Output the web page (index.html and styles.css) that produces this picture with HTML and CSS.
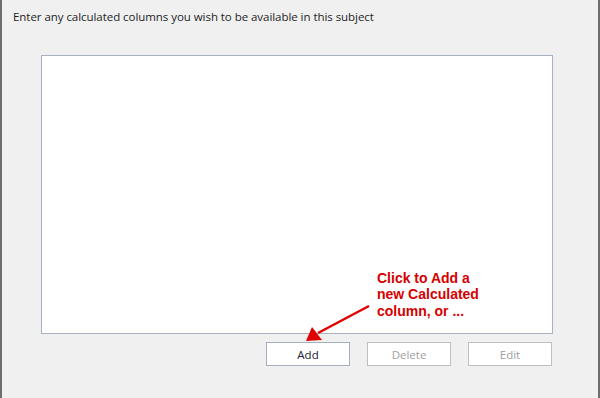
FILE: index.html
```html
<!DOCTYPE html>
<html>
<head>
<meta charset="utf-8">
<link rel="stylesheet" href="styles.css">
</head>
<body>
<div class="frame">
  <p class="intro">Enter any calculated columns you wish to be available in this subject</p>
  <div class="listbox"></div>
  <div class="buttons">
    <button class="btn">Add</button>
    <button class="btn disabled">Delete</button>
    <button class="btn disabled">Edit</button>
  </div>
  <div class="note">Click to Add a<br>new Calculated<br>column, or ...</div>
  <svg class="arrow" width="600" height="398" viewBox="0 0 600 398">
    <line x1="369" y1="306" x2="318" y2="333" stroke="#e00000" stroke-width="2.5"/>
    <polygon points="306,341 312,327 322,340" fill="#e00000"/>
  </svg>
</div>
</body>
</html>
```
FILE: styles.css
```css
html, body {
  margin: 0;
  padding: 0;
}
body {
  width: 600px;
  height: 398px;
  overflow: hidden;
  background: #f0f0f0;
}
.frame {
  position: relative;
  box-sizing: border-box;
  width: 600px;
  height: 398px;
  border-left: 2px solid #6e6e6e;
  border-right: 2px solid #6e6e6e;
  background: #f0f0f0;
  padding: 9px 0 0 11px;
  font-family: "Open Sans", "Noto Sans", sans-serif;
}
.intro {
  margin: 0;
  font-size: 11.5px;
  color: #1e1e1e;
  line-height: 16px;
  letter-spacing: -0.05px;
}
.listbox {
  margin: 30px 0 0 28px;
  width: 510px;
  height: 277px;
  background: #ffffff;
  border: 1px solid #a9b2c2;
}
.buttons {
  display: flex;
  gap: 17px;
  margin: 8px 0 0 253px;
}
.btn {
  box-sizing: border-box;
  width: 84px;
  height: 24px;
  background: #ffffff;
  border: 1px solid #adadad;
  font-family: "Open Sans", "Noto Sans", sans-serif;
  font-size: 11.5px;
  color: #1e1e1e;
  padding: 0;
}
.btn:first-child {
  border-color: #a6b0c0;
  color: #1a2030;
}
.btn.disabled {
  color: #a0a0a0;
  border-color: #bfbfbf;
}
.note {
  position: absolute;
  left: 375px;
  top: 270px;
  font-family: "Liberation Sans", Arial, sans-serif;
  font-weight: bold;
  font-size: 14px;
  line-height: 16.3px;
  color: #d40000;
}
.arrow {
  position: absolute;
  left: -2px;
  top: 0;
  pointer-events: none;
}
```
